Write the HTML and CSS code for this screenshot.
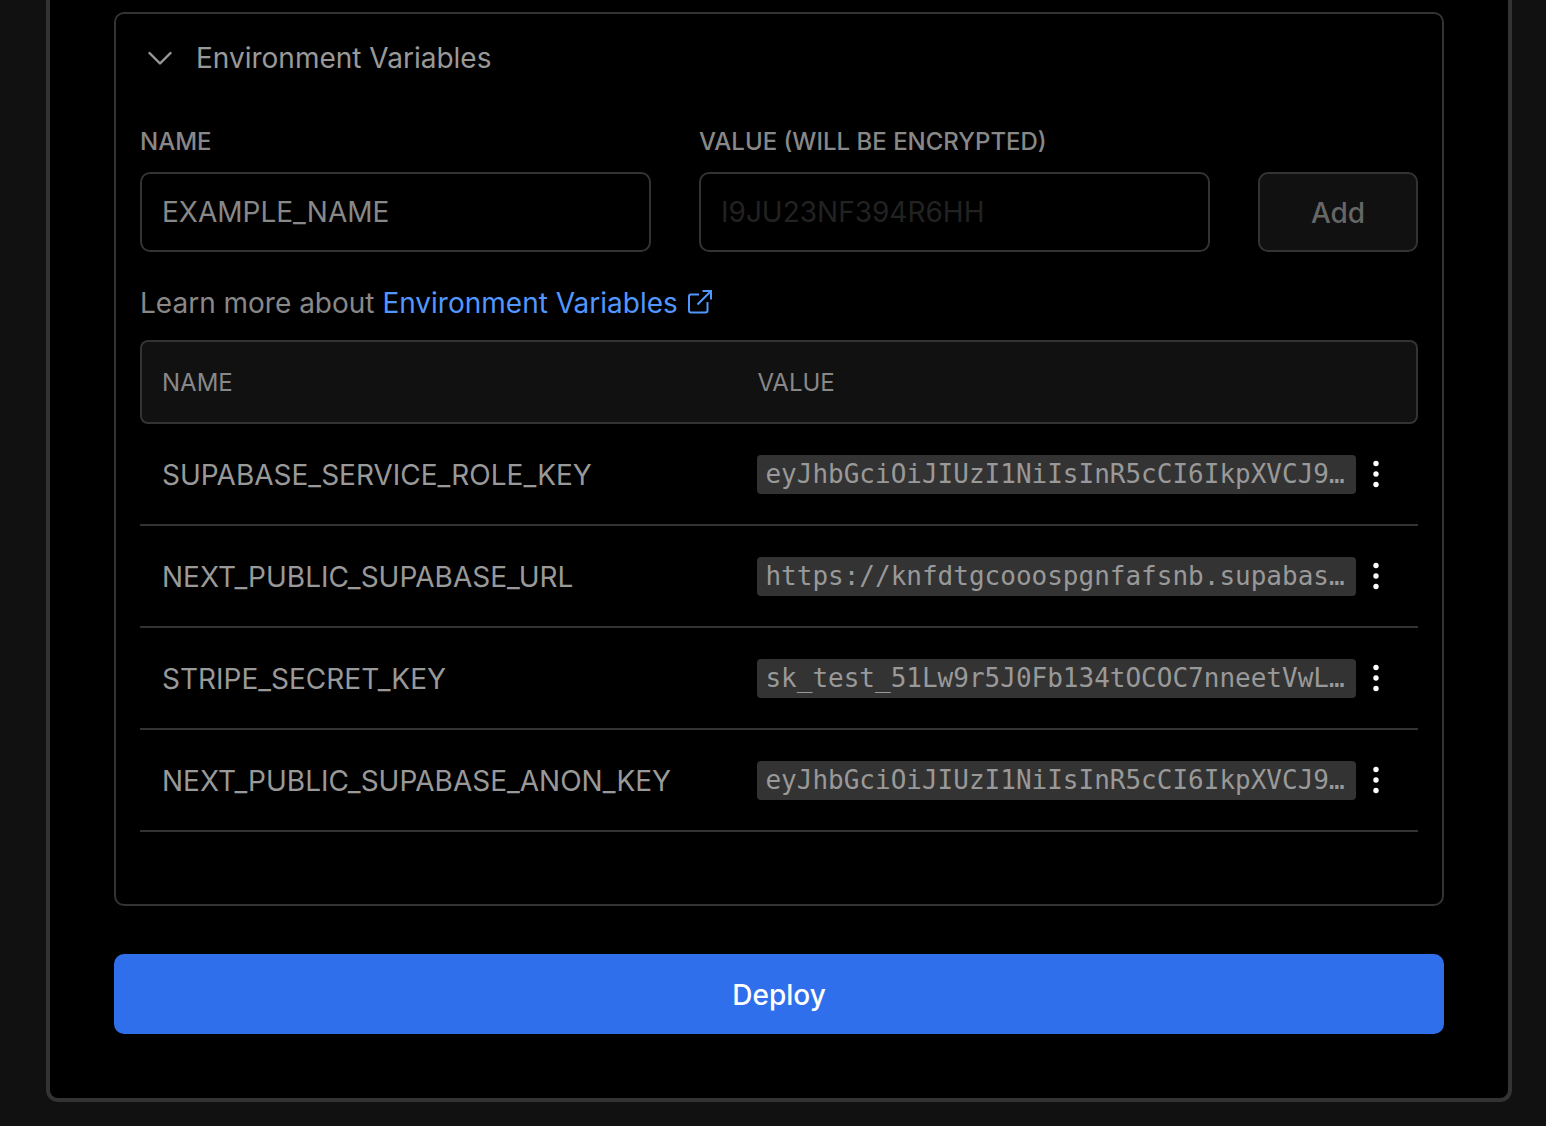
FILE: index.html
```html
<!DOCTYPE html>
<html lang="en">
<head>
<meta charset="utf-8">
<meta name="viewport" content="width=device-width, initial-scale=1">
<title>Configure Project</title>
<link rel="stylesheet" href="styles.css">
</head>
<body>
<main class="card">
  <details class="panel" open>
    <summary class="panel-title">
      <svg class="chevron" viewBox="0 0 24 24" aria-hidden="true"><path d="M1.500 7L12 17.500L22.500 7"/></svg>
      Environment Variables
    </summary>
    <div class="panel-body">
      <form class="env-form">
        <div class="field">
          <label class="label" for="env-name">NAME</label>
          <input class="input" id="env-name" type="text" value="EXAMPLE_NAME">
        </div>
        <div class="field">
          <label class="label" for="env-value">VALUE (WILL BE ENCRYPTED)</label>
          <input class="input" id="env-value" type="text" placeholder="I9JU23NF394R6HH">
        </div>
        <button class="add" type="button" disabled>Add</button>
      </form>
      <p class="learn">Learn more about
        <a class="link" href="#docs">Environment Variables<svg class="external" viewBox="0 0 24 24" aria-hidden="true"><path d="M11 4.500H3A2 2 0 0 0 1 6.500V20.500A2 2 0 0 0 3 22.500H17.500A2 2 0 0 0 19.500 20.500V12M14.500 1H23V9.500M23 1L9.500 14.500"/></svg></a>
      </p>
      <table class="env-table">
        <thead>
          <tr><th class="col-name" scope="col">NAME</th><th class="col-value" scope="col">VALUE</th><th class="col-menu"></th></tr>
        </thead>
        <tbody>
          <tr>
            <td class="col-name">SUPABASE_SERVICE_ROLE_KEY</td>
            <td class="col-value"><code class="code">eyJhbGciOiJIUzI1NiIsInR5cCI6IkpXVCJ9…</code></td>
            <td class="col-menu"><button class="menu" type="button" aria-label="Options"><svg class="dots" viewBox="0 0 6 26"><circle cx="3" cy="2.500" r="2.700"/><circle cx="3" cy="13" r="2.700"/><circle cx="3" cy="23.500" r="2.700"/></svg></button></td>
          </tr>
          <tr>
            <td class="col-name">NEXT_PUBLIC_SUPABASE_URL</td>
            <td class="col-value"><code class="code">https://knfdtgcooospgnfafsnb.supabas…</code></td>
            <td class="col-menu"><button class="menu" type="button" aria-label="Options"><svg class="dots" viewBox="0 0 6 26"><circle cx="3" cy="2.500" r="2.700"/><circle cx="3" cy="13" r="2.700"/><circle cx="3" cy="23.500" r="2.700"/></svg></button></td>
          </tr>
          <tr>
            <td class="col-name">STRIPE_SECRET_KEY</td>
            <td class="col-value"><code class="code">sk_test_51Lw9r5J0Fb134tOCOC7nneetVwL…</code></td>
            <td class="col-menu"><button class="menu" type="button" aria-label="Options"><svg class="dots" viewBox="0 0 6 26"><circle cx="3" cy="2.500" r="2.700"/><circle cx="3" cy="13" r="2.700"/><circle cx="3" cy="23.500" r="2.700"/></svg></button></td>
          </tr>
          <tr>
            <td class="col-name">NEXT_PUBLIC_SUPABASE_ANON_KEY</td>
            <td class="col-value"><code class="code">eyJhbGciOiJIUzI1NiIsInR5cCI6IkpXVCJ9…</code></td>
            <td class="col-menu"><button class="menu" type="button" aria-label="Options"><svg class="dots" viewBox="0 0 6 26"><circle cx="3" cy="2.500" r="2.700"/><circle cx="3" cy="13" r="2.700"/><circle cx="3" cy="23.500" r="2.700"/></svg></button></td>
          </tr>
        </tbody>
      </table>
    </div>
  </details>
  <button class="deploy" type="button">Deploy</button>
</main>
</body>
</html>
```
FILE: styles.css
```css
* {
  box-sizing: border-box;
}

body {
  margin: 0;
  padding: 0 34px 24px 46px;
  background: #111;
  color: #999;
  font: 400 28px/40px Inter, sans-serif;
}

.card {
  padding: 12px 64px 64px;
  border: 4px solid #333;
  border-top: 0;
  border-radius: 0 0 12px 12px;
  background: #000;
}

.panel {
  border: 2px solid #333;
  border-radius: 10px;
}

.panel-title {
  display: flex;
  align-items: center;
  gap: 24px;
  height: 88px;
  padding: 0 32px;
  list-style: none;
  cursor: pointer;
}

.chevron {
  width: 24px;
  height: 24px;
  fill: none;
  stroke: #999;
  stroke-width: 2.4;
  stroke-linecap: round;
  stroke-linejoin: round;
}

.panel-body {
  padding: 24px 24px 72px;
}

.env-form {
  display: grid;
  grid-template-columns: 1fr 1fr 160px;
  gap: 48px;
  align-items: end;
}

.field {
  display: flex;
  flex-direction: column;
  gap: 14px;
  min-width: 0;
}

.label {
  color: #888;
  font-size: 24px;
  font-weight: 500;
  line-height: 32px;
}

.input {
  width: 100%;
  height: 80px;
  padding: 0 20px;
  border: 2px solid #333;
  border-radius: 10px;
  background: #000;
  color: #888;
  font: inherit;
}

.input::placeholder {
  color: #222;
  opacity: 1;
}

.add {
  height: 80px;
  padding: 2px 0 0;
  border: 2px solid #333;
  border-radius: 10px;
  background: #111;
  color: #666;
  font: inherit;
  font-weight: 500;
}

.learn {
  margin: 31px 0 17px;
  color: #888;
}

.link {
  color: #5296ff;
  text-decoration: none;
}

.external {
  width: 24px;
  height: 24px;
  margin-left: 10px;
  vertical-align: -1px;
  fill: none;
  stroke: currentColor;
  stroke-width: 2;
}

.env-table {
  width: 100%;
  table-layout: fixed;
  border-collapse: separate;
  border-spacing: 0;
}

.env-table th {
  height: 84px;
  padding-top: 2px;
  border: 0 solid #333;
  border-width: 2px 0;
  background: #111;
  color: #888;
  font-size: 24px;
  font-weight: 400;
  text-align: left;
}

.env-table th:first-child {
  padding-left: 20px;
  border-left-width: 2px;
  border-radius: 8px 0 0 8px;
}

.env-table th:last-child {
  border-right-width: 2px;
  border-radius: 0 8px 8px 0;
}

.env-table td {
  height: 102px;
  border-bottom: 2px solid #333;
}

.col-name {
  width: 48%;
  padding: 2px 0 0 22px;
}

.col-value {
  padding: 0 0 0 4px;
}

.col-menu {
  width: 62px;
  padding: 0;
}

.code {
  display: block;
  padding: 0 8px;
  overflow: hidden;
  border-radius: 4px;
  background: #333;
  font: 26px/39px "DejaVu Sans Mono", monospace;
  text-overflow: ellipsis;
  white-space: nowrap;
}

.menu {
  display: flex;
  align-items: center;
  justify-content: center;
  width: 40px;
  height: 40px;
  padding: 0;
  border: 0;
  background: none;
}

.dots {
  width: 6px;
  height: 26px;
  overflow: visible;
  fill: #fff;
}

.deploy {
  display: block;
  width: 100%;
  height: 80px;
  margin-top: 48px;
  padding: 2px 0 0;
  border: 0;
  border-radius: 10px;
  background: #2f6feb;
  color: #fff;
  font: inherit;
  font-weight: 500;
}
```
